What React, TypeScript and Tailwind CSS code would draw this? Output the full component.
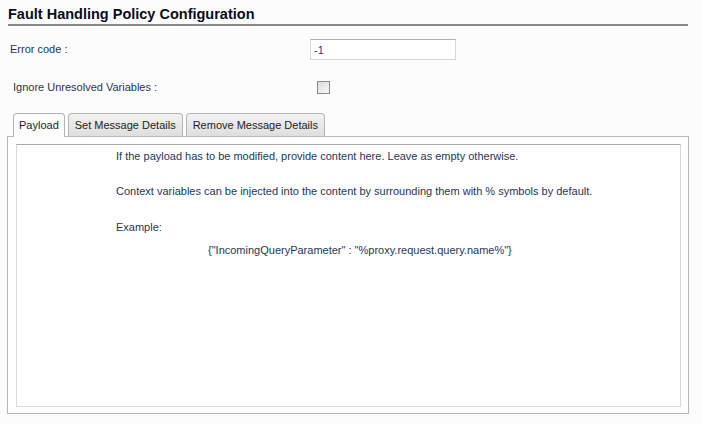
export default function App() {
  const tabs = ['Payload', 'Set Message Details', 'Remove Message Details']

  return (
    <div
      className="w-[702px] h-[424px] bg-[#fcfcfc] overflow-hidden"
      style={{ fontFamily: '"Liberation Sans", Arial, sans-serif' }}
    >
      <div className="pl-[8px] pr-[14px] pt-[5px]">
        <h1 className="text-[14.5px] leading-[18px] font-bold text-[#0b0b20] pb-[1px] border-b-2 border-[#888888]">
          Fault Handling Policy Configuration
        </h1>
      </div>

      {/* form rows */}
      <div className="flex items-center h-[21px] mt-[13px]">
        <label className="w-[310px] pl-[10px] text-[11px] text-[#2b3550]">Error code :</label>
        <input
          defaultValue="-1"
          className="w-[146px] h-[21px] border border-[#d6d6d6] border-t-[#b0b0b0] bg-white px-[3px] text-[11px] text-[#6a0a8a] outline-none"
        />
      </div>
      <div className="flex items-center h-[13px] mt-[21px]">
        <label className="w-[317px] pl-[13px] text-[11px] text-[#2b3550]">Ignore Unresolved Variables :</label>
        <span className="w-[13px] h-[13px] border border-[#8a8a8a] bg-gradient-to-br from-[#dcdcdc] to-[#f8f8f8]" />
      </div>

      {/* tabs */}
      <div className="flex items-end gap-[3px] pl-[13px] mt-[19px] h-[23px]">
        {tabs.map((t, i) => (
          <div
            key={t}
            className={
              i === 0
                ? 'h-[24px] -mb-px z-10 px-[5px] flex items-center rounded-t-[4px] border border-b-0 border-[#b4b4b4] bg-[#fdfdfd] text-[11px] text-[#1e1e1e]'
                : 'h-[23px] px-[6px] flex items-center rounded-t-[4px] border border-b-0 border-[#b4b4b4] bg-gradient-to-b from-[#f2f2f2] to-[#dedede] text-[11px] text-[#1e1e1e]'
            }
          >
            {t}
          </div>
        ))}
      </div>

      <div className="relative ml-[7px] w-[682px] h-[278px] border border-[#b8b8b8] bg-[#fefefe] pt-[7px] pl-[8px]">
        <div className="w-[665px] h-[263px] border border-[#d8d8d8] border-t-[#a8a8a8] bg-white pl-[99px] pt-[5px] text-[11px] text-[#263659] leading-[13px]">
          <p>If the payload has to be modified, provide content here. Leave as empty otherwise.</p>
          <p className="mt-[22px]">Context variables can be injected into the content by surrounding them with % symbols by default.</p>
          <p className="mt-[23px]">Example:</p>
          <p className="mt-[10px] pl-[92px]">{'{"IncomingQueryParameter" : "%proxy.request.query.name%"}'}</p>
        </div>
      </div>
    </div>
  )
}
